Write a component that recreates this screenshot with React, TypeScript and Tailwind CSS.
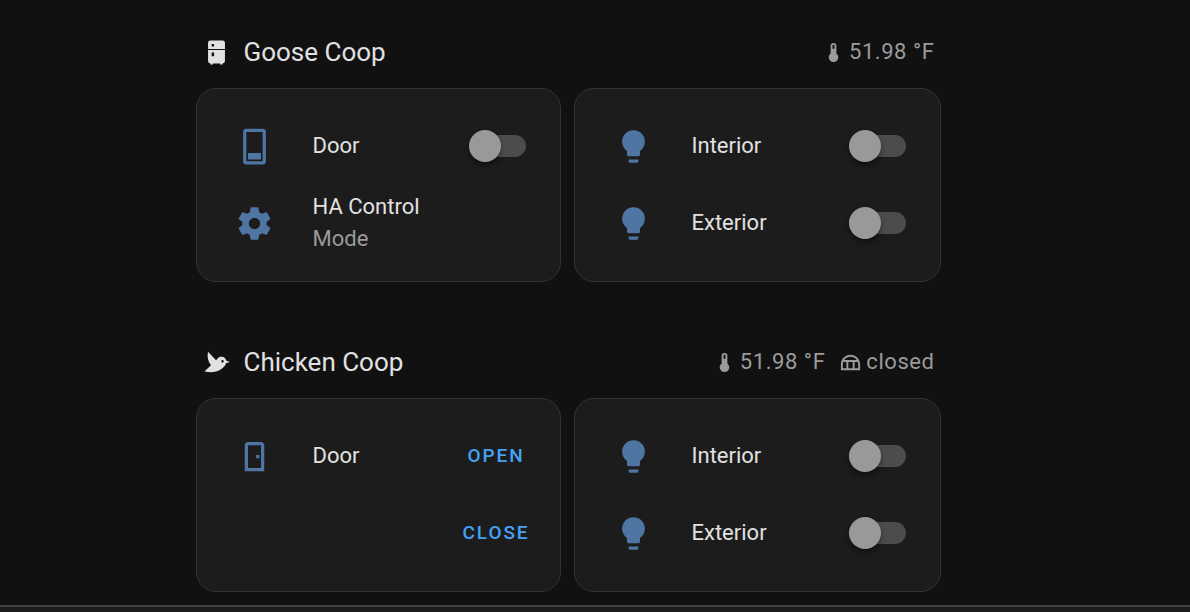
import type { ReactNode } from "react";

const icons = {
  fridge:
    "M7,2H17A2,2 0 0,1 19,4V9H5V4A2,2 0 0,1 7,2M19,19A2,2 0 0,1 17,21V22H15V21H9V22H7V21A2,2 0 0,1 5,19V10H19V19M8,5V7H10V5H8M8,12V15H10V12H8Z",
  bird: "M23 11.5L19.95 10.37C19.69 9.22 19.04 8.56 19.04 8.56C17.4 6.92 14.75 6.92 13.11 8.56L11.63 10.04L5 3C4 7 5 11 7.45 14.22L2 19.5C2 19.5 10.89 21.5 16.07 17.45C18.83 15.29 19.45 14.03 19.84 12.7L23 11.5M17.71 11.72C17.32 12.11 16.68 12.11 16.29 11.72C15.9 11.33 15.9 10.7 16.29 10.31C16.68 9.92 17.32 9.92 17.71 10.31C18.1 10.7 18.1 11.33 17.71 11.72Z",
  thermometer:
    "M15 13V5A3 3 0 0 0 9 5V13A5 5 0 1 0 15 13M12 4A1 1 0 0 1 13 5V8H11V5A1 1 0 0 1 12 4Z",
  dome: "M12 4C6.5 4 2 8.5 2 14V20H22V14C22 8.5 17.5 4 12 4M12 6C15 6 17.3 7.3 18.6 9.5H5.4C6.7 7.3 9 6 12 6M4 18V14C4 13.1 4.2 12.3 4.5 11.5H7.7V18H4M9.7 18V11.5H14.3V18H9.7M16.3 18V11.5H19.5C19.8 12.3 20 13.1 20 14V18H16.3Z",
  hatch:
    "M7,1H17A2,2 0 0,1 19,3V21A2,2 0 0,1 17,23H7A2,2 0 0,1 5,21V3A2,2 0 0,1 7,1M7,3V21H17V3H7M8,16H16V20H8V16Z",
  door: "M8,3C6.89,3 6,3.89 6,5V21H18V5C18,3.89 17.11,3 16,3H8M8,5H16V19H8V5M13,11V13H15V11H13Z",
  cog: "M12,15.5A3.5,3.5 0 0,1 8.5,12A3.5,3.5 0 0,1 12,8.5A3.5,3.5 0 0,1 15.5,12A3.5,3.5 0 0,1 12,15.5M19.43,12.97C19.47,12.65 19.5,12.33 19.5,12C19.5,11.67 19.47,11.34 19.43,11L21.54,9.37C21.73,9.22 21.78,8.95 21.66,8.73L19.66,5.27C19.54,5.05 19.27,4.96 19.05,5.05L16.56,6.05C16.04,5.66 15.5,5.32 14.87,5.07L14.5,2.42C14.46,2.18 14.25,2 14,2H10C9.75,2 9.54,2.18 9.5,2.42L9.13,5.07C8.5,5.32 7.96,5.66 7.44,6.05L4.95,5.05C4.73,4.96 4.46,5.05 4.34,5.27L2.34,8.73C2.21,8.95 2.27,9.22 2.46,9.37L4.57,11C4.53,11.34 4.5,11.67 4.5,12C4.5,12.33 4.53,12.65 4.57,12.97L2.46,14.63C2.27,14.78 2.21,15.05 2.34,15.27L4.34,18.73C4.46,18.95 4.73,19.03 4.95,18.95L7.44,17.94C7.96,18.34 8.5,18.68 9.13,18.93L9.5,21.58C9.54,21.82 9.75,22 10,22H14C14.25,22 14.46,21.82 14.5,21.58L14.87,18.93C15.5,18.67 16.04,18.34 16.56,17.94L19.05,18.95C19.27,19.03 19.54,18.95 19.66,18.73L21.66,15.27C21.78,15.05 21.73,14.78 21.54,14.63L19.43,12.97Z",
  bulb: "M12,2A7,7 0 0,0 5,9C5,11.38 6.19,13.47 8,14.74V17A1,1 0 0,0 9,18H15A1,1 0 0,0 16,17V14.74C17.81,13.47 19,11.38 19,9A7,7 0 0,0 12,2M9,21A1,1 0 0,0 10,22H14A1,1 0 0,0 15,21V20H9V21Z",
};

type IconName = keyof typeof icons;

function Icon({ name, className }: { name: IconName; className: string }) {
  return (
    <svg viewBox="0 0 24 24" aria-hidden="true" className={className}>
      <path d={icons[name]} fill="currentColor" fillRule="evenodd" />
    </svg>
  );
}

function Stat({ icon, children }: { icon: IconName; children: ReactNode }) {
  return (
    <span className="flex items-center gap-1">
      <Icon name={icon} className="size-[23px]" />
      <span>{children}</span>
    </span>
  );
}

function Heading({ icon, title, children }: { icon: IconName; title: string; children: ReactNode }) {
  return (
    <header className="flex h-8 items-center justify-between px-1.5">
      <h2 className="flex items-center gap-[13px] text-[26px] leading-8">
        <Icon name={icon} className="size-[29px]" />
        {title}
      </h2>
      <div className="flex items-center gap-[14px] text-[22px] leading-8 tracking-wide text-[#9b9b9b]">{children}</div>
    </header>
  );
}

function CardGrid({ children }: { children: ReactNode }) {
  return <div className="mt-5 grid grid-cols-[365fr_367fr] gap-[13px]">{children}</div>;
}

function Card({ padding = "pl-[26px]", children }: { padding?: string; children: ReactNode }) {
  return (
    <div
      className={`flex flex-col gap-[13px] rounded-[20px] border border-[#333333] bg-[#1c1c1c] pt-[25px] pr-[25px] pb-[26px] ${padding}`}
    >
      {children}
    </div>
  );
}

function RowIcon({ name }: { name: IconName }) {
  return (
    <span className="flex w-16 shrink-0 justify-center pt-px text-[#4f76a3]">
      <Icon name={name} className="size-[39px]" />
    </span>
  );
}

function ToggleRow({ id, icon, label }: { id: string; icon: IconName; label: string }) {
  return (
    <div className="flex h-16 items-center">
      <RowIcon name={icon} />
      <label htmlFor={id} className="ml-[26px] grow text-[22px] leading-8">
        {label}
      </label>
      <input
        id={id}
        type="checkbox"
        role="switch"
        className="relative mr-[9px] h-[22px] w-[57px] cursor-pointer appearance-none rounded-full bg-[#4c4c4c] before:absolute before:-top-[5px] before:left-0 before:size-8 before:rounded-full before:bg-[#999999] before:shadow-md before:shadow-black/40 before:transition-transform checked:bg-[#2f5f8a] checked:before:translate-x-[25px]"
      />
    </div>
  );
}

function ActionButton({ children }: { children: ReactNode }) {
  return (
    <button type="button" className="w-[77px] cursor-pointer text-center text-[19px] leading-8 font-medium tracking-widest text-[#44a2f5]">
      {children}
    </button>
  );
}

function LightsCard({ coop }: { coop: string }) {
  return (
    <Card padding="pl-[27px]">
      <ToggleRow id={`${coop}-interior`} icon="bulb" label="Interior" />
      <ToggleRow id={`${coop}-exterior`} icon="bulb" label="Exterior" />
    </Card>
  );
}

export default function App() {
  return (
    <div className="flex min-h-screen flex-col bg-[#111111] font-[Roboto,sans-serif] text-[#e1e1e1]">
      <div className="w-full grow pt-9 pr-[54px]">
        <main className="mx-auto flex w-full max-w-[745px] flex-col gap-16">
          <section>
            <Heading icon="fridge" title="Goose Coop">
              <Stat icon="thermometer">51.98 °F</Stat>
            </Heading>
            <CardGrid>
              <Card>
                <ToggleRow id="goose-door" icon="hatch" label="Door" />
                <div className="flex h-16 items-center">
                  <RowIcon name="cog" />
                  <div className="ml-[26px] text-[22px] leading-8">
                    <div>HA Control</div>
                    <div className="text-[#9b9b9b]">Mode</div>
                  </div>
                </div>
              </Card>
              <LightsCard coop="goose" />
            </CardGrid>
          </section>

          <section>
            <Heading icon="bird" title="Chicken Coop">
              <Stat icon="thermometer">51.98 °F</Stat>
              <Stat icon="dome">closed</Stat>
            </Heading>
            <CardGrid>
              <Card>
                <div className="flex h-16 items-center">
                  <RowIcon name="door" />
                  <span className="ml-[26px] grow text-[22px] leading-8">Door</span>
                  <ActionButton>OPEN</ActionButton>
                </div>
                <div className="flex h-16 items-center justify-end">
                  <ActionButton>CLOSE</ActionButton>
                </div>
              </Card>
              <LightsCard coop="chicken" />
            </CardGrid>
          </section>
        </main>
      </div>
      <footer className="mt-[13px] h-[7px] border-t-2 border-[#3f3f3f] bg-[#1c1c1c]" />
    </div>
  );
}
